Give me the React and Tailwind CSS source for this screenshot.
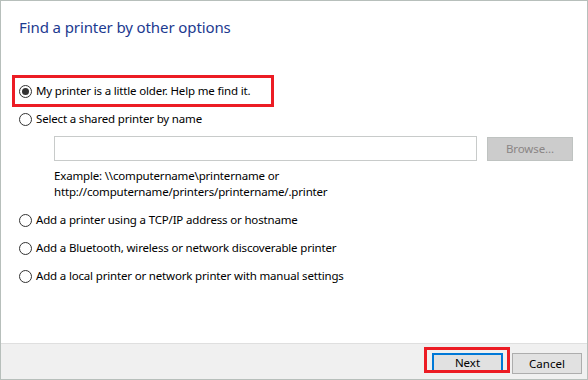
import React from "react";

function Radio({ checked }) {
  return (
    <span className="w-[13px] h-[13px] rounded-full border border-[#333333] bg-white flex items-center justify-center shrink-0">
      {checked && <span className="w-[7px] h-[7px] rounded-full bg-[#333333]" />}
    </span>
  );
}

function Row({ checked, children, className = "" }) {
  return (
    <div className={"flex items-center h-[20px] gap-[4px] " + className}>
      <Radio checked={checked} />
      <span className="text-[11.5px] tracking-[-0.17px] leading-[16px] text-black whitespace-nowrap">{children}</span>
    </div>
  );
}

export default function App() {
  return (
    <div className="w-[588px] h-[380px] border border-[#b7bfbb] bg-white flex flex-col font-['Noto_Sans',sans-serif] overflow-hidden">
      <div className="h-[342px] flex flex-col">
        <div className="pl-[18px] pt-[16px] text-[15px] tracking-[-0.1px] leading-[20px] text-[#1c3a90]">
          Find a printer by other options
        </div>
        <div className="mt-[38px] ml-[11px] w-[262px] h-[32px] border-[3px] border-[#ec1c24] pl-[4px] flex items-center">
          <Row checked>My printer is a little older. Help me find it.</Row>
        </div>
        <Row className="mt-[2px] ml-[18px]">Select a shared printer by name</Row>
        <div className="mt-[7px] ml-[53px] flex items-start">
          <div className="w-[423px] h-[25px] border border-[#c8cbca] bg-white" />
          <button className="ml-[10px] mt-[1px] w-[86px] h-[24px] bg-[#cccccc] border border-[#bfc3c1] text-[11.5px] tracking-[-0.1px] text-[#8a8585] flex items-center justify-center">
            Browse...
          </button>
        </div>
        <div className="mt-[7px] ml-[53px] text-[11.5px] tracking-[-0.17px] leading-[16px] text-black">
          <div>Example: \\computername\printername or</div>
          <div>http://computername/printers/printername/.printer</div>
        </div>
        <Row className="mt-[10px] ml-[18px]">Add a printer using a TCP/IP address or hostname</Row>
        <Row className="mt-[8px] ml-[18px]">Add a Bluetooth, wireless or network discoverable printer</Row>
        <Row className="mt-[8px] ml-[18px]">Add a local printer or network printer with manual settings</Row>
      </div>
      <div className="flex-1 border-t border-[#dfdfdf] bg-[#f0f0f0] flex justify-end items-start pt-[9px] pr-[5px]">
        <div className="relative">
          <button className="w-[71px] h-[20px] bg-[#e1e1e1] border-2 border-[#0078d7] text-[11.5px] text-black flex items-center justify-center">
            Next
          </button>
          <div className="absolute left-[-8px] top-[-6px] w-[86px] h-[26px] border-[3px] border-[#ec1c24] pointer-events-none" />
        </div>
        <button className="ml-[9px] w-[70px] h-[21px] bg-[#e1e1e1] border border-[#adadad] text-[11.5px] text-black flex items-center justify-center">
          Cancel
        </button>
      </div>
    </div>
  );
}
